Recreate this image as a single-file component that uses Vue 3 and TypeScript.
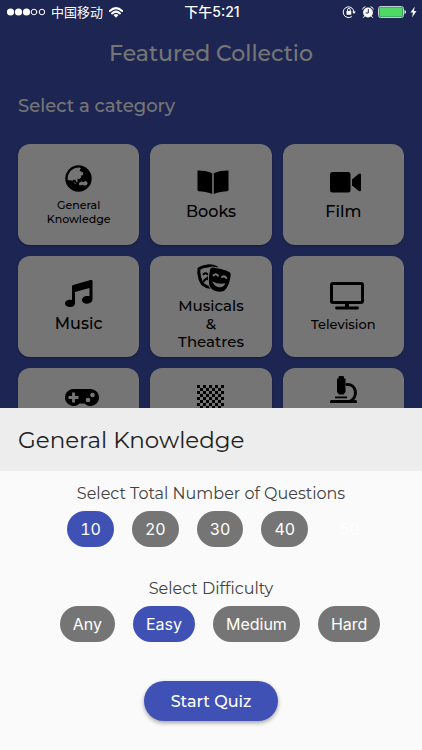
<script setup lang="ts">
import { ref } from 'vue'

interface Category {
  name: string
  icon: string
  size: 'small' | 'medium' | 'normal' | 'large'
}

const categories: Category[] = [
  { name: 'General Knowledge', icon: 'globe', size: 'small' },
  { name: 'Books', icon: 'book', size: 'large' },
  { name: 'Film', icon: 'film', size: 'large' },
  { name: 'Music', icon: 'music', size: 'large' },
  { name: 'Musicals\n&\nTheatres', icon: 'masks', size: 'normal' },
  { name: 'Television', icon: 'tv', size: 'medium' },
  { name: 'Video\nGames', icon: 'gamepad', size: 'normal' },
  { name: 'Board\nGames', icon: 'board', size: 'normal' },
  { name: 'Science\n&\nNature', icon: 'microscope', size: 'normal' },
]

const squares = Array.from({ length: 81 }, (_, i) => ({ x: i % 9, y: Math.floor(i / 9) })).filter(
  (s) => (s.x + s.y) % 2 === 0,
)

const counts = [10, 20, 30, 40, 50]
const difficulties = ['Any', 'Easy', 'Medium', 'Hard']
const count = ref(10)
const difficulty = ref('Easy')
</script>

<template>
  <div class="screen">
    <main class="page">
      <h1>Featured Collectio</h1>
      <h2>Select a category</h2>
      <div class="grid">
        <button v-for="c in categories" :key="c.name" class="card" :class="c.size" type="button">
          <svg v-if="c.icon === 'globe'" viewBox="0 0 27 27">
            <circle cx="13.5" cy="13.5" r="13.2" />
            <path class="cut" d="M2.800 15.200C2 8.500 6.600 2.600 14.200 2.600L16 3.200 14.500 5.300 15.900 6.500 18 7.500 18.300 9.700 16.300 10.500 15.900 12.800 14 14.200 12.400 13.400 12.800 16.200 11.600 17.600 10.300 14.700 8.300 14.800 7.300 16 5.500 15.300Z" />
            <path class="cut" d="M14.500 17.400 17 16.200 18 17.400 20.800 15.800 22.700 18 21.700 20.200 19.200 20.600 17.400 19.800 14.800 20.500 13.700 19Z" />
            <path class="cut" d="M8.300 17.200 11 18 10.300 18.900Z" />
          </svg>
          <svg v-else-if="c.icon === 'book'" viewBox="1 0 27 27">
            <path d="M1.500 2.500C7 2.500 12 3.100 16.200 5.200V26C12 23.900 7 23.300 2.700 23.200Q1.500 23.100 1.500 22ZM32.500 2.500C27 2.500 22 3.100 17.800 5.200V26C22 23.900 27 23.300 31.300 23.200Q32.500 23.100 32.500 22Z" />
          </svg>
          <svg v-else-if="c.icon === 'film'" viewBox="0 0 27 27">
            <rect x="0" y="4" width="20.500" height="20.500" rx="2.500" />
            <path d="M22 11.500 28.500 6Q31 4.800 31 7V22Q31 24 28.500 22.700L22 17.500Z" />
          </svg>
          <svg v-else-if="c.icon === 'music'" viewBox="0 0 27 27">
            <path d="M7 6.600Q7 5.500 8.200 5.100L25.500.1Q27.500-.3 27.500 1.300V19.300C27.500 25 17 25 17 20.200 17 16.500 21 15.300 24.500 16.200V8L10 12V23.500C10 28.200 0 28.200 0 23.600 0 20.200 4 19.200 7 20Z" />
          </svg>
          <svg v-else-if="c.icon === 'masks'" viewBox="0 0 27 27">
            <path class="line" d="M19.500 3.500C14.500.8 6.500 1.500 2 4.800 1.200 9 3 17.800 6 20.300 8 22 10.500 23.200 13 23.300" />
            <path class="thin" d="M6.500 10.200q2-2 4 0M6.700 17.500q1-2.600 4.500-2.900M13 7.600q2-1.500 3-.2M10.500 13.500l1 2.300" />
            <path class="gap" d="M15.500 3.500C20 4.400 28 5.300 32.500 8.200Q34 9 33.700 11C33 17 31 24 26.800 27 20 29 14.500 26 12.600 22 11.300 17.500 12 11 13 6Q13.400 3.300 15.500 3.500Z" />
            <path class="paper-line" d="M16.500 11.500q2.300-2.600 4.500.3M25 13q2.700-1.600 4.300 1" />
            <path class="cut" d="M15.300 17.200Q21 20.700 28.200 19.300C26.800 25.500 17 24 15.300 17.200Z" />
          </svg>
          <svg v-else-if="c.icon === 'tv'" viewBox="0 0 27 27">
            <rect class="frame" x="1.500" y="1.500" width="31" height="19" rx="1.500" />
            <path d="M15 21h4v3.500h8.500a1.400 1.400 0 0 1 0 2.900H6.500a1.400 1.400 0 0 1 0-2.900H15Z" />
          </svg>
          <svg v-else-if="c.icon === 'gamepad'" viewBox="0 0 27 27">
            <path d="M8.500 4H25.500A8.500 8.500 0 1 1 19.500 18.500H14.500A8.500 8.500 0 1 1 8.500 4Z" />
            <path class="cut" d="M7.100 7.500h2.800v3.600h3.600v2.800H9.900v3.600H7.100v-3.600H3.500v-2.800h3.600Z" />
            <circle class="cut" cx="27.500" cy="10" r="2.300" />
            <circle class="cut" cx="23" cy="15" r="2.300" />
          </svg>
          <svg v-else-if="c.icon === 'board'" viewBox="0 0 9 9" shape-rendering="crispEdges">
            <rect v-for="s in squares" :key="s.x + '-' + s.y" :x="s.x" :y="s.y" width="1" height="1" />
          </svg>
          <svg v-else viewBox="0 0 27 27">
            <path d="M7 2.500H8.500V1.300Q8.500 0 9.800 0H12.700Q14 0 14 1.300V2.500H15.500V16L13.500 18.500H9L7 16Z" />
            <path class="frame" d="M17 8.500C27 8 28 21.500 20.500 25" />
            <path d="M5 20.500H17v1.700H5ZM1.700 24H25.500a1.500 1.500 0 0 1 1.500 1.500V27H0V25.500A1.500 1.500 0 0 1 1.700 24Z" />
          </svg>
          <span>{{ c.name }}</span>
        </button>
      </div>
    </main>

    <div class="scrim"></div>

    <header class="status">
      <div class="carrier">
        <svg width="38" height="8" viewBox="0 0 38 8">
          <circle v-for="n in 3" :key="n" class="fill" :cx="n * 8 - 4.5" cy="4" r="3.600" />
          <circle class="ring" cx="27" cy="4" r="2.800" />
          <circle class="ring" cx="35" cy="4" r="2.800" />
        </svg>
        <span>中国移动</span>
        <svg width="14" height="11" viewBox="0 0 14 11">
          <path class="wave" d="M.8 4Q7-1.800 13.200 4M3 6.400Q7 2.800 11 6.400" />
          <path class="fill" d="M4.500 8Q7 5.900 9.500 8L7 10.700Z" />
        </svg>
      </div>
      <span class="time">下午5:21</span>
      <div class="indicators">
        <svg width="16" height="14" viewBox="0 0 16 14">
          <path class="ring" d="M9.500 11.800A5.400 5.400 0 1 1 12 7" />
          <path class="ring" d="M5.500 6V4.800a1.400 1.400 0 0 1 2.800 0V6" />
          <path class="fill" d="M4.500 6h4.800v3.800H4.500ZM10.200 6.500h3.600L12 9Z" />
        </svg>
        <svg width="12" height="12" viewBox="0 0 12 12">
          <circle class="fill" cx="6" cy="6.500" r="4.900" />
          <path class="ring" d="M.7 3Q1 1 3 .8M11.300 3Q11 1 9 .8M2.500 10.300 1.400 11.500M9.500 10.300l1.100 1.200" />
          <path class="hands" d="M6.300 3.500V7H4" />
        </svg>
        <svg width="28" height="12" viewBox="0 0 28 12">
          <rect class="shell" x=".5" y=".5" width="25" height="11" rx="2" />
          <rect class="charge" x="1.300" y="1.300" width="23.400" height="9.400" rx="1" />
          <path class="fill" d="M26.500 4Q28 4.500 28 6T26.500 8Z" />
        </svg>
        <svg width="7" height="12" viewBox="0 0 7 12">
          <path class="fill" d="M4.800.5.500 6.600H3L2 11.500 6.500 5H3.900Z" />
        </svg>
      </div>
    </header>

    <section class="sheet" role="dialog" aria-labelledby="sheet-title">
      <h3 id="sheet-title">General Knowledge</h3>
      <div class="options">
        <p id="count-label">Select Total Number of Questions</p>
        <div class="chips" role="group" aria-labelledby="count-label">
          <button
            v-for="n in counts"
            :key="n"
            type="button"
            :class="{ selected: n === count }"
            :disabled="n === 50"
            @click="count = n"
          >{{ n }}</button>
        </div>
        <p id="difficulty-label">Select Difficulty</p>
        <div class="chips" role="group" aria-labelledby="difficulty-label">
          <button
            v-for="d in difficulties"
            :key="d"
            type="button"
            :class="{ selected: d === difficulty }"
            @click="difficulty = d"
          >{{ d }}</button>
        </div>
        <button class="start" type="button">Start Quiz</button>
      </div>
    </section>
  </div>
</template>

<style>
body {
  margin: 0;
}
</style>

<style scoped>
* {
  box-sizing: border-box;
}

.screen {
  position: relative;
  display: flex;
  flex-direction: column;
  height: 100vh;
  overflow: hidden;
  background: #3f51b5;
  font-family: Montserrat, Inter, "Noto Sans CJK SC", sans-serif;
}

button {
  border: 0;
  font: inherit;
}

.page {
  flex: 1;
  min-height: 0;
  padding: 36px 18px 0;
  overflow: hidden;
}

h1,
h2,
h3,
p {
  margin: 0;
  font-weight: 400;
}

h1 {
  color: #fff;
  font-size: 22px;
  font-weight: 500;
  line-height: 36px;
  text-align: center;
}

h2 {
  margin-top: 20px;
  color: #fff;
  font-size: 18px;
  font-weight: 500;
  line-height: 28px;
}

.grid {
  display: grid;
  grid-template-columns: repeat(3, 1fr);
  grid-auto-rows: 101px;
  gap: 11px;
  margin-top: 24px;
}

.card {
  display: flex;
  flex-direction: column;
  align-items: center;
  justify-content: center;
  gap: 6px;
  padding: 2px 24px 0;
  border-radius: 12px;
  background: #fff;
  color: #000;
  font-size: 15px;
  font-weight: 500;
  line-height: 18px;
  white-space: pre-line;
  box-shadow: 0 1px 2px rgba(0, 0, 0, 0.3);
}

.card svg {
  flex: none;
  width: 27px;
  height: 27px;
  overflow: visible;
}

.card.small {
  font-size: 11px;
  line-height: 14px;
}

.card.medium {
  padding: 2px 8px 0;
  font-size: 13px;
}

.card.large {
  font-size: 16px;
  line-height: 22px;
}

.cut {
  fill: #fff;
}

.line,
.thin,
.paper-line,
.frame,
.wave,
.ring,
.hands,
.shell {
  fill: none;
  stroke-linecap: round;
  stroke-linejoin: round;
}

.line,
.frame {
  stroke: #000;
  stroke-width: 3;
}

.thin {
  stroke: #000;
  stroke-width: 2;
}

.gap {
  stroke: #fff;
  stroke-width: 2;
  paint-order: stroke;
}

.paper-line {
  stroke: #fff;
  stroke-width: 2;
}

.scrim {
  position: absolute;
  inset: 0;
  background: rgba(0, 0, 0, 0.54);
}

.status {
  position: absolute;
  inset: 0 0 auto;
  display: grid;
  grid-template-columns: 1fr auto 1fr;
  align-items: center;
  height: 24px;
  padding: 0 5px 0 7px;
  color: #fff;
  font-family: Inter, "Noto Sans CJK SC", sans-serif;
  font-size: 13px;
  line-height: 20px;
}

.carrier,
.indicators {
  display: flex;
  align-items: center;
  gap: 6px;
}

.indicators {
  justify-content: flex-end;
  gap: 4px;
}

.time {
  font-size: 14px;
  font-weight: 500;
}

.fill {
  fill: #fff;
}

.wave {
  stroke: #fff;
  stroke-width: 2;
}

.ring {
  stroke: #fff;
  stroke-width: 1;
}

.hands {
  stroke: #1d2553;
  stroke-width: 1;
}

.shell {
  stroke: #c8cbdc;
}

.charge {
  fill: #4cd964;
}

.sheet {
  position: relative;
  flex: none;
  background: #fafafa;
}

h3 {
  padding: 16px 18px 15px;
  background: #ededed;
  color: #212121;
  font-size: 23px;
  line-height: 32px;
}

.options {
  display: flex;
  flex-direction: column;
  align-items: center;
  padding: 11px 0 29px;
}

p {
  color: #424242;
  font-size: 16px;
  line-height: 24px;
}

.chips {
  display: flex;
  gap: 18px;
  margin: 5px 0 30px;
  padding-left: 18px;
}

.chips button {
  height: 36px;
  padding: 0 13px;
  border-radius: 18px;
  background: #757575;
  color: #fff;
  font-family: Inter, sans-serif;
  font-size: 16px;
  font-variant-numeric: tabular-nums;
  line-height: 24px;
}

.chips .selected {
  background: #3f51b5;
}

.chips button:disabled {
  background: transparent;
}

.start {
  height: 40px;
  margin-top: 9px;
  padding: 0 27px;
  border-radius: 20px;
  background: #3f51b5;
  color: #fff;
  font-size: 16px;
  font-weight: 500;
  box-shadow: 0 2px 4px rgba(0, 0, 0, 0.35);
}
</style>
